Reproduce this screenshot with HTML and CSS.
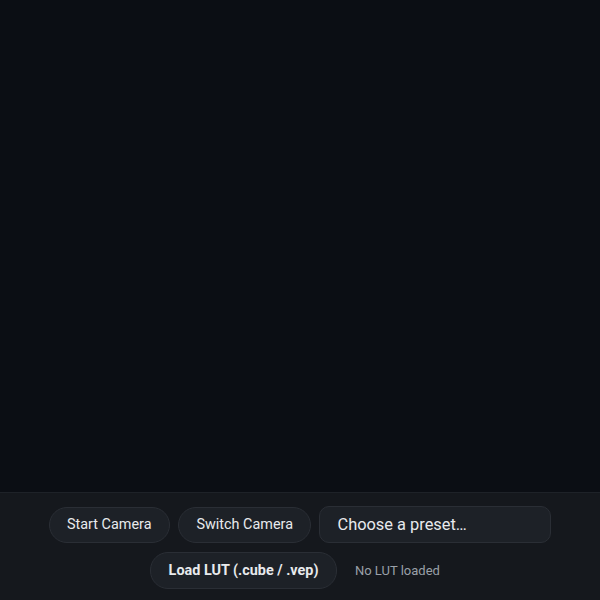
FILE: index.html
```html
<!DOCTYPE html>
<html>
<head>
<meta charset="utf-8">
<link rel="stylesheet" href="styles.css">
</head>
<body>
<div class="app">
  <div class="stage"></div>
  <div class="bar">
    <div class="row">
      <button class="btn">Start Camera</button>
      <button class="btn">Switch Camera</button>
      <div class="select">Choose a preset…</div>
    </div>
    <div class="row">
      <button class="btn bold">Load LUT (.cube / .vep)</button>
      <span class="status">No LUT loaded</span>
    </div>
  </div>
</div>
</body>
</html>
```
FILE: styles.css
```css
html, body {
  margin: 0;
  padding: 0;
  height: 100%;
  background: #0b0e14;
  font-family: Roboto, "Noto Sans", sans-serif;
}
.app {
  height: 100vh;
  display: flex;
  flex-direction: column;
}
.stage {
  flex: 1;
  background: #0b0e14;
}
.bar {
  background: #15181d;
  border-top: 1px solid #1e2228;
  padding: 13px 16px 11px;
  display: flex;
  flex-direction: column;
  gap: 9px;
}
.row {
  display: flex;
  justify-content: center;
  align-items: center;
  gap: 8px;
}
.btn {
  font-family: inherit;
  font-size: 14.4px;
  line-height: 16px;
  color: #e8eaed;
  background: #1d2127;
  border: 1px solid #2a2e35;
  border-radius: 18px;
  padding: 9px 17.5px;
  height: 36px;
  box-sizing: border-box;
}
.btn.bold {
  font-weight: 700;
  height: 37px;
}
.select {
  width: 232px;
  height: 37px;
  box-sizing: border-box;
  background: #1d2127;
  border: 1px solid #2a2e35;
  border-radius: 10px;
  padding: 0 17px;
  display: flex;
  align-items: center;
  font-size: 16.4px;
  color: #e8eaed;
}
.status {
  font-size: 13px;
  color: #9aa0a8;
  padding: 0 10px;
}
```
